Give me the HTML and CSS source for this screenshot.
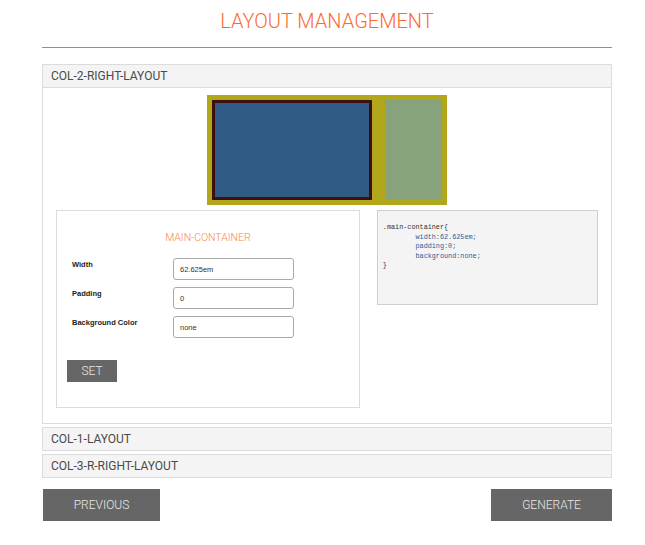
FILE: index.html
```html
<!DOCTYPE html>
<html>
<head>
<meta charset="utf-8">
<link rel="stylesheet" href="styles.css">
</head>
<body>
<div class="page">
  <header class="title-bar">
    <h1 class="title">LAYOUT MANAGEMENT</h1>
  </header>
  <div class="title-rule"></div>

  <section class="acc">
    <div class="acc-head">COL-2-RIGHT-LAYOUT</div>
    <div class="acc-body">
      <div class="preview">
        <div class="pv-main"></div>
        <div class="pv-side"></div>
      </div>
      <div class="editor">
        <div class="form-box">
          <div class="form-title">MAIN-CONTAINER</div>
          <div class="row">
            <label class="lbl">Width</label>
            <div class="inp">62.625em</div>
          </div>
          <div class="row">
            <label class="lbl">Padding</label>
            <div class="inp">0</div>
          </div>
          <div class="row">
            <label class="lbl">Background Color</label>
            <div class="inp">none</div>
          </div>
          <button class="btn btn-set">SET</button>
        </div>
        <div class="code-box"><pre class="code"><span class="sel">.main-container{</span>
<span class="prop">        width:62.625em;</span>
<span class="prop">        padding:0;</span>
<span class="prop">        background:none;</span>
<span class="sel">}</span></pre></div>
      </div>
    </div>
  </section>

  <section class="acc">
    <div class="acc-head">COL-1-LAYOUT</div>
  </section>
  <section class="acc">
    <div class="acc-head">COL-3-R-RIGHT-LAYOUT</div>
  </section>

  <div class="actions">
    <button class="btn btn-prev">PREVIOUS</button>
    <button class="btn btn-gen">GENERATE</button>
  </div>
</div>
</body>
</html>
```

FILE: styles.css
```css
html, body {
  margin: 0;
  padding: 0;
  background: #fff;
}
body {
  font-family: Roboto, "Liberation Sans", sans-serif;
}
.page {
  width: 570px;
  margin-left: 42px;
}
.title-bar {
  height: 47px;
  display: flex;
  justify-content: center;
}
.title-rule {
  height: 1px;
  background: #fb6a34;
  margin-bottom: 16px;
}
.title {
  margin: 0;
  padding-top: 8px;
  padding-left: 0;
  font-weight: 300;
  font-size: 20px;
  line-height: 26px;
  color: #fb6a34;
}
.acc {
  margin-bottom: 3px;
}
.acc-head {
  height: 22px;
  line-height: 22px;
  background: #f4f4f4;
  border: 1px solid #dcdcdc;
  padding-left: 8px;
  font-size: 12px;
  color: #4a4a4a;
  font-weight: 400;
}
.acc-body {
  border: 1px solid #dcdcdc;
  border-top: none;
  padding: 7px 13px 15px 13px;
}
.preview {
  width: 230px;
  height: 100px;
  margin: 0 auto 5px auto;
  background: #b2a71a;
  padding: 5px;
  display: flex;
  gap: 13px;
}
.pv-main {
  width: 154px;
  height: 94px;
  border: 3px solid #3e1010;
  background: #2f5b84;
}
.pv-side {
  width: 57px;
  height: 100px;
  background: #86a37c;
}
.editor {
  display: flex;
  gap: 17px;
  align-items: flex-start;
}
.form-box {
  width: 303px;
  height: 196px;
  border: 1px solid #dcdcdc;
}
.form-title {
  text-align: center;
  font-size: 10.5px;
  font-weight: 300;
  color: #f7874f;
  margin-top: 20px;
  height: 27px;
}
.row {
  display: flex;
  height: 29px;
  padding-left: 15px;
}
.lbl {
  width: 101px;
  font-family: "Liberation Sans", Arial, sans-serif;
  font-weight: bold;
  font-size: 7.5px;
  color: #222;
  padding-top: 2px;
}
.inp {
  width: 113px;
  height: 19px;
  border: 1px solid #a9a9a9;
  border-radius: 3px;
  padding-left: 6px;
  padding-top: 1px;
  font-family: "Liberation Sans", Arial, sans-serif;
  font-size: 7.5px;
  line-height: 19px;
  color: #333;
}
.btn {
  border: none;
  background: #666;
  color: #e8e8e8;
  font-family: Roboto, "Liberation Sans", sans-serif;
  font-weight: 300;
  font-size: 12px;
  padding: 0;
  cursor: pointer;
}
.btn-set {
  margin-left: 10px;
  margin-top: 15px;
  width: 50px;
  height: 22px;
}
.code-box {
  width: 220px;
  height: 93px;
  background: #f4f4f4;
  border: 1px solid #cfcfcf;
}
.code {
  margin: 12px 0 0 5px;
  font-family: "Liberation Mono", "DejaVu Sans Mono", monospace;
  font-size: 6.8px;
  line-height: 9.6px;
  color: #333;
}
.sel {
  color: #333;
}
.prop {
  color: #2d5f95;
}
.actions {
  display: flex;
  justify-content: space-between;
  margin-top: 11px;
}
.btn-prev {
  margin-left: 1px;
  width: 117px;
  height: 32px;
}
.btn-gen {
  width: 121px;
  height: 32px;
}
```
